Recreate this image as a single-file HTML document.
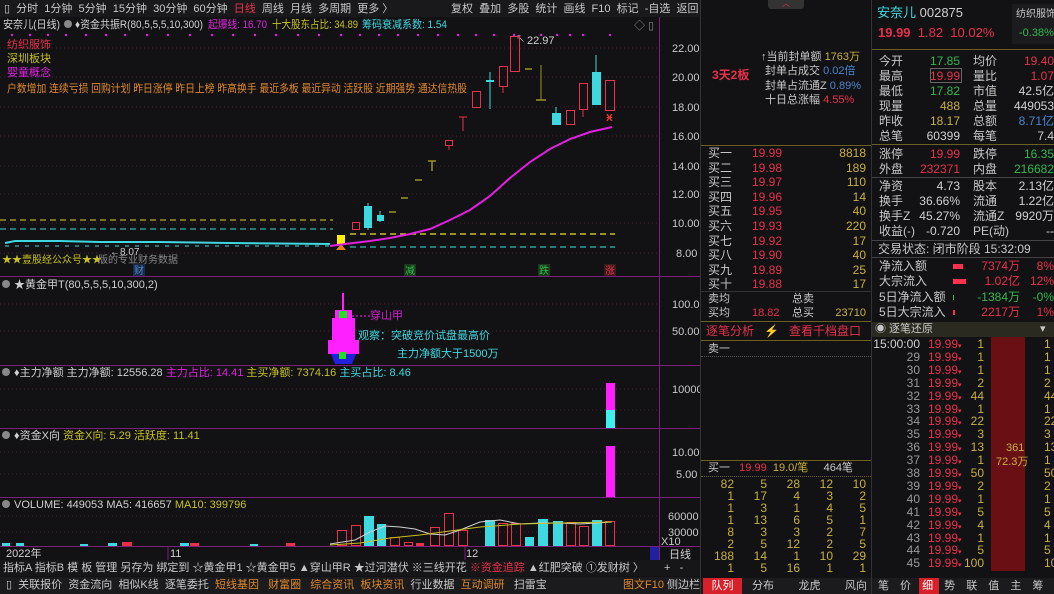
<!DOCTYPE html>
<html><head><meta charset="utf-8"><style>
*{margin:0;padding:0;box-sizing:border-box}
body{width:1054px;height:594px;background:#121214;overflow:hidden;position:relative;font-family:"Liberation Sans","Noto Sans CJK SC",sans-serif;font-size:11px;color:#c8c8c8}
.a{position:absolute;white-space:nowrap;line-height:13px}
.r{color:#e8304a}.g{color:#2fb84e}.y{color:#c8b040}.c{color:#3ed8e0}.m{color:#e020e0}.w{color:#d0d0d0}.b{color:#4a86d0}.o{color:#e0882a}
.hl{position:absolute;height:1px}
.rt{text-align:right}
</style></head><body>
<div class="a" style="left:0;top:0;width:700px;height:17px;background:#19191c"></div>
<div class="a" style="left:4px;top:3px;font-size:11px">▯&nbsp; 分时 &nbsp;1分钟 &nbsp;5分钟 &nbsp;15分钟 &nbsp;30分钟 &nbsp;60分钟 &nbsp;<span class="r">日线</span> &nbsp;周线 &nbsp;月线 &nbsp;多周期 &nbsp;更多 〉</div>
<div class="a" style="left:451px;top:3px">复权 &nbsp;叠加 &nbsp;多股 &nbsp;统计 &nbsp;画线 &nbsp;F10 &nbsp;标记 &nbsp;-自选 &nbsp;返回</div>

<svg class="a" style="left:0;top:17px" width="700" height="543" viewBox="0 17 700 543">
<line x1="659.5" y1="17" x2="659.5" y2="560" stroke="#7a1f7a"/>
<g stroke="#7a1f7a"><line x1="0" y1="276.5" x2="700" y2="276.5"/><line x1="0" y1="365.5" x2="700" y2="365.5"/><line x1="0" y1="428.5" x2="700" y2="428.5"/><line x1="0" y1="497.5" x2="700" y2="497.5"/><line x1="0" y1="546.5" x2="700" y2="546.5"/></g>
<g stroke="#4a1f3a" stroke-dasharray="1 3"><line x1="0" y1="48" x2="659" y2="48"/><line x1="0" y1="77" x2="659" y2="77"/><line x1="0" y1="107" x2="659" y2="107"/><line x1="0" y1="136" x2="659" y2="136"/><line x1="0" y1="166" x2="659" y2="166"/><line x1="0" y1="194" x2="659" y2="194"/><line x1="0" y1="223" x2="659" y2="223"/><line x1="0" y1="253" x2="659" y2="253"/>
<line x1="0" y1="304" x2="659" y2="304"/><line x1="0" y1="331" x2="659" y2="331"/><line x1="0" y1="389" x2="659" y2="389"/><line x1="0" y1="410" x2="659" y2="410"/><line x1="0" y1="452" x2="659" y2="452"/><line x1="0" y1="474" x2="659" y2="474"/><line x1="0" y1="516" x2="659" y2="516"/><line x1="0" y1="532" x2="659" y2="532"/></g>
<g font-size="11" fill="#c8c8c8"><text x="672" y="52">22.00</text><text x="672" y="81">20.00</text><text x="672" y="111">18.00</text><text x="672" y="140">16.00</text><text x="672" y="170">14.00</text><text x="672" y="198">12.00</text><text x="672" y="227">10.00</text><text x="676" y="257">8.00</text>
<text x="672" y="308">100.0</text><text x="672" y="335">50.00</text><text x="672" y="393">10000</text><text x="672" y="456">10.00</text><text x="676" y="478">5.00</text><text x="668" y="520">60000</text><text x="668" y="536">30000</text><text x="661" y="545">X10</text></g>
<g font-size="11"><text x="3" y="28" fill="#d0d0d0" textLength="57" lengthAdjust="spacingAndGlyphs">安奈儿(日线)</text><circle cx="68" cy="24" r="4" fill="#888"/><text x="75" y="28" fill="#d0d0d0" textLength="128" lengthAdjust="spacingAndGlyphs">♦资金共振R(80,5,5,5,10,300)</text><text x="208" y="28" fill="#e020e0" textLength="59" lengthAdjust="spacingAndGlyphs">起爆线: 16.70</text><text x="272" y="28" fill="#c8c020" textLength="86" lengthAdjust="spacingAndGlyphs">十大股东占比: 34.89</text><text x="362" y="28" fill="#3ed8e0" textLength="85" lengthAdjust="spacingAndGlyphs">筹码衰减系数: 1.54</text>
<text x="7" y="48" fill="#e8304a">纺织服饰</text><text x="7" y="62" fill="#c8c020">深圳板块</text><text x="7" y="76" fill="#e020e0">婴童概念</text>
<text x="7" y="92" fill="#e0882a" textLength="460" lengthAdjust="spacingAndGlyphs">户数增加 连续亏损 回购计划 昨日涨停 昨日上榜 昨高换手 最近多板 最近异动 活跃股 近期强势 通达信热股</text></g>
<text x="634" y="29" fill="#888" font-size="11">◇ ▯</text>
<g fill="#e020e0"><circle cx="12" cy="35" r="1.2"/><circle cx="30" cy="35" r="1.2"/><circle cx="48" cy="35" r="1.2"/><circle cx="66" cy="35" r="1.2"/><circle cx="86" cy="35" r="1.2"/><circle cx="106" cy="35" r="1.2"/><circle cx="125" cy="35" r="1.2"/><circle cx="147" cy="35" r="1.2"/><circle cx="168" cy="35" r="1.2"/><circle cx="190" cy="35" r="1.2"/><circle cx="212" cy="35" r="1.2"/><circle cx="233" cy="35" r="1.2"/><circle cx="255" cy="35" r="1.2"/><circle cx="276" cy="35" r="1.2"/><circle cx="298" cy="35" r="1.2"/><circle cx="319" cy="35" r="1.2"/><circle cx="341" cy="35" r="1.2"/><circle cx="360" cy="35" r="1.2"/><circle cx="379" cy="35" r="1.2"/><circle cx="398" cy="35" r="1.2"/><circle cx="418" cy="35" r="1.2"/><circle cx="438" cy="35" r="1.2"/><circle cx="458" cy="35" r="1.2"/><circle cx="476" cy="35" r="1.2"/><circle cx="494" cy="35" r="1.2"/><circle cx="514" cy="35" r="1.2"/><circle cx="541" cy="35" r="1.2"/><circle cx="557" cy="35" r="1.2"/><circle cx="570" cy="35" r="1.2"/><circle cx="583" cy="35" r="1.2"/><circle cx="610" cy="35" r="1.2"/></g>
<text x="527" y="44" font-size="11" fill="#d0d0d0">22.97</text><text x="516" y="42" font-size="9" fill="#d0d0d0">↖</text>
<g stroke-dasharray="6 4" stroke-width="1.5"><line x1="0" y1="220" x2="333" y2="220" stroke="#9a9420"/><line x1="0" y1="229" x2="333" y2="229" stroke="#2a9a9a"/><line x1="350" y1="234" x2="615" y2="234" stroke="#c8c020"/><line x1="350" y1="247" x2="615" y2="247" stroke="#2aa0a0"/></g>
<polyline points="5,243 15,241 60,241 100,242 160,242 230,243 330,244" fill="none" stroke="#3ed8e0" stroke-width="2"/>
<g stroke="#3ed8e0"><line x1="5" y1="246" x2="330" y2="246" stroke-dasharray="4 6"/></g>
<text x="110" y="255" fill="#d0d0d0" font-size="10">←8.07</text>
<text x="2" y="263" font-size="10" fill="#c8c020">★★壹股经公众号★★</text><text x="98" y="263" font-size="10" fill="#888">版的专业财务数据</text>
<g stroke-width="1">
<rect x="337" y="235" width="8" height="10" fill="#ffee00"/><path d="M336 250 l5-6 l5 6z" fill="#e08020"/>
<rect x="352.5" y="222.5" width="7" height="7" fill="none" stroke="#e8304a"/>
<rect x="364" y="206" width="8" height="22" fill="#3ed8e0"/><line x1="368" y1="203" x2="368" y2="230" stroke="#3ed8e0"/>
<rect x="377" y="215" width="7" height="6" fill="#3ed8e0"/><line x1="380" y1="211" x2="380" y2="222" stroke="#3ed8e0"/>
<g stroke="#9a9420" stroke-width="1.5"><line x1="389" y1="212" x2="396" y2="212"/><line x1="401" y1="198" x2="408" y2="198"/><line x1="415" y1="180" x2="422" y2="180"/><line x1="428" y1="161" x2="436" y2="161"/><line x1="432" y1="161" x2="432" y2="171"/></g>
<rect x="445.5" y="140.5" width="7" height="5" fill="none" stroke="#e8304a"/><line x1="449" y1="146" x2="449" y2="150" stroke="#e8304a"/>
<line x1="463" y1="117" x2="463" y2="131" stroke="#e8304a"/><line x1="459" y1="117" x2="467" y2="117" stroke="#e8304a"/>
<rect x="472.5" y="91.5" width="8" height="16" fill="none" stroke="#e8304a"/>
<line x1="490" y1="72" x2="490" y2="109" stroke="#3ed8e0"/><line x1="486" y1="81" x2="494" y2="81" stroke="#3ed8e0" stroke-width="2"/>
<rect x="499.5" y="66.5" width="8" height="20" fill="none" stroke="#e8304a"/><line x1="503" y1="87" x2="503" y2="93" stroke="#e8304a"/>
<rect x="510.5" y="36.5" width="9" height="35" fill="none" stroke="#e8304a"/>
<line x1="525" y1="69" x2="532" y2="69" stroke="#9a9420" stroke-width="1.5"/>
<line x1="541" y1="65" x2="541" y2="100" stroke="#9a9420"/><line x1="536" y1="100" x2="546" y2="100" stroke="#9a9420" stroke-width="1.5"/>
<rect x="552" y="113" width="9" height="12" fill="#3ed8e0"/><line x1="556" y1="107" x2="556" y2="113" stroke="#3ed8e0"/>
<rect x="566.5" y="110.5" width="8" height="14" fill="none" stroke="#e8304a"/>
<rect x="579.5" y="83.5" width="8" height="26" fill="none" stroke="#e8304a"/><line x1="583" y1="110" x2="583" y2="117" stroke="#e8304a"/>
<rect x="592" y="72" width="9" height="33" fill="#3ed8e0"/><line x1="596" y1="55" x2="596" y2="72" stroke="#3ed8e0"/>
<rect x="605.5" y="80.5" width="9" height="30" fill="none" stroke="#e8304a"/>
<text x="606" y="121" fill="#ff3030" font-size="10" font-weight="bold">Ӿ</text>
</g>
<polyline points="330,246 345,244 370,241 390,238 410,234 430,229 450,220 470,210 490,196 510,178 530,162 550,149 570,139 590,132 612,127" fill="none" stroke="#e020e0" stroke-width="2"/>
<rect x="133" y="264" width="12" height="12" fill="#1a2a4a"/><text x="134" y="274" fill="#4a86d0" font-size="10">财</text>
<rect x="404" y="264" width="12" height="12" fill="#1a3a1a"/><text x="405" y="274" fill="#2fb84e" font-size="10">减</text>
<rect x="538" y="264" width="12" height="12" fill="#1a3a1a"/><text x="539" y="274" fill="#2fb84e" font-size="10">跌</text>
<rect x="604" y="264" width="12" height="12" fill="#3a1a1a"/><text x="605" y="274" fill="#e8304a" font-size="10">涨</text>
<circle cx="6" cy="284" r="4" fill="#888"/><text x="14" y="288" font-size="11" fill="#d0d0d0">★黄金甲T(80,5,5,5,10,300,2)</text>
<line x1="343" y1="293" x2="343" y2="310" stroke="#ff20ff" stroke-width="2"/>
<rect x="335" y="310" width="17" height="8" fill="#ff20ff"/><rect x="332" y="318" width="23" height="22" fill="#ff20ff"/><rect x="328" y="340" width="31" height="14" fill="#ff20ff"/>
<path d="M331 354 h25 l-4 10 h-17z" fill="#2020e0"/><rect x="339" y="311" width="8" height="7" fill="#20e020"/><rect x="339" y="352" width="7" height="7" fill="#20e020"/>
<line x1="348" y1="316" x2="370" y2="316" stroke="#ff20ff" stroke-dasharray="2 2"/>
<text x="370" y="319" font-size="11" fill="#d020d0">穿山甲</text>
<text x="358" y="339" font-size="11" fill="#3ed8e0">观察：突破竞价试盘最高价</text>
<text x="397" y="357" font-size="11" fill="#3ed8e0">主力净额大于1500万</text>
<circle cx="6" cy="372" r="4" fill="#888"/><text x="14" y="376" font-size="11"><tspan fill="#d0d0d0">♦主力净额 主力净额: 12556.28 </tspan><tspan fill="#e020e0">主力占比: 14.41 </tspan><tspan fill="#c8c020">主买净额: 7374.16 </tspan><tspan fill="#3ed8e0">主买占比: 8.46</tspan></text>
<rect x="606" y="383" width="9" height="27" fill="#ff20ff"/><rect x="606" y="410" width="9" height="18" fill="#3ef0f0"/>
<circle cx="6" cy="435" r="4" fill="#888"/><text x="14" y="439" font-size="11"><tspan fill="#d0d0d0">♦资金X向 </tspan><tspan fill="#c8c020">资金X向: 5.29 活跃度: 11.41</tspan></text>
<rect x="606" y="446" width="9" height="51" fill="#ff20ff"/>
<circle cx="6" cy="504" r="4" fill="#888"/><text x="14" y="508" font-size="11"><tspan fill="#d0d0d0">VOLUME: 449053 MA5: 416657 </tspan><tspan fill="#c8c020">MA10: 399796</tspan></text>
<g fill="#3ed8e0"><rect x="364" y="516" width="10" height="30"/><rect x="377" y="524" width="9" height="22"/><rect x="485" y="520" width="10" height="26"/><rect x="525" y="537" width="9" height="9"/><rect x="538" y="519" width="10" height="27"/><rect x="553" y="521" width="10" height="25"/><rect x="592" y="520" width="10" height="26"/>
<rect x="2" y="543" width="8" height="3"/><rect x="16" y="543" width="8" height="3"/><rect x="80" y="544" width="8" height="2"/><rect x="108" y="543" width="9" height="3"/><rect x="180" y="543" width="9" height="3"/><rect x="250" y="544" width="8" height="2"/></g>
<g fill="none" stroke="#e8304a"><rect x="337.5" y="530.5" width="9" height="15"/><rect x="351.5" y="525.5" width="9" height="20"/><rect x="390.5" y="537.5" width="9" height="8"/><rect x="404.5" y="542.5" width="8" height="3"/><rect x="430.5" y="527.5" width="9" height="18"/><rect x="444.5" y="513.5" width="9" height="32"/><rect x="458.5" y="530.5" width="9" height="15"/><rect x="498.5" y="523.5" width="9" height="22"/><rect x="511.5" y="523.5" width="9" height="22"/><rect x="566.5" y="522.5" width="9" height="23"/><rect x="579.5" y="526.5" width="9" height="19"/><rect x="605.5" y="521.5" width="9" height="24"/></g>
<g fill="#e8304a"><rect x="122" y="542" width="10" height="4"/><rect x="190" y="543" width="9" height="3"/><rect x="286" y="543" width="9" height="3"/><rect x="416" y="543" width="8" height="3"/></g>
<polyline points="330,544 355,540 370,532 385,526 400,527 415,529 430,534 445,535 460,530 480,522 500,520 520,524 540,523 560,523 580,524 612,522" fill="none" stroke="#d0d0d0" stroke-width="1"/>
<polyline points="330,545 360,543 390,538 420,535 450,531 480,527 520,524 560,523 612,522" fill="none" stroke="#c8c020" stroke-width="1"/>
<text x="6" y="557" font-size="11" fill="#d0d0d0">2022年</text><line x1="168" y1="547" x2="168" y2="560" stroke="#7a1f7a"/><text x="170" y="557" font-size="11" fill="#d0d0d0">11</text>
<line x1="465" y1="547" x2="465" y2="560" stroke="#7a1f7a"/><text x="466" y="557" font-size="11" fill="#d0d0d0">12</text>
<rect x="650" y="547" width="9" height="13" fill="#2020a0"/><text x="669" y="558" font-size="11" fill="#d0d0d0">日线</text>
</svg>
<div class="a" style="left:0;top:560px;width:700px;height:16px;background:#161618"></div>
<div class="a" style="left:3px;top:562px">指标A 指标B 模 板 管理 另存为 绑定到 ☆黄金甲1 ☆黄金甲5 ▲穿山甲R ★过河潜伏 ※三线开花 <span class="r">※资金追踪</span> ▲红肥突破 ①发财树 〉</div>
<div class="a" style="left:664px;top:562px">+ &nbsp; -</div>
<div class="a" style="left:0;top:577px;width:700px;height:17px;background:#1b1b1e"></div>
<div class="a" style="left:6px;top:579px">▯ &nbsp;关联报价 &nbsp;资金流向 &nbsp;相似K线 &nbsp;逐笔委托 &nbsp;<span class="o">短线基因 &nbsp;&nbsp;财富圈 &nbsp;&nbsp;综合资讯 &nbsp;板块资讯</span> &nbsp;行业数据 &nbsp;<span class="o">互动调研</span> &nbsp;&nbsp;扫雷宝</div>
<div class="a" style="left:623px;top:579px"><span class="o">图文F10</span> 侧边栏</div>

<div class="a" style="left:700px;top:0;width:1px;height:594px;background:#333"></div>
<div class="a" style="left:871px;top:0;width:1px;height:594px;background:#333"></div>
<div class="a" style="left:768px;top:0;width:36px;height:9px;background:#333;border-radius:0 0 3px 3px;color:#e8304a;font-size:8px;line-height:8px;text-align:center">︿</div>
<div class="a r" style="left:712px;top:69px;font-size:12px;font-weight:bold">3天2板</div>
<div class="a" style="left:761px;top:51px">↑当前封单额 <span class="y">1763万</span></div>
<div class="a" style="left:765px;top:65px">封单占成交 <span class="b">0.02倍</span></div>
<div class="a" style="left:765px;top:80px">封单占流通Z <span class="b">0.89%</span></div>
<div class="a" style="left:765px;top:94px">十日总涨幅 <span class="r">4.55%</span></div>
<div class="hl" style="left:701px;top:145px;width:170px;background:#6a6020"></div>
<div class="hl" style="left:701px;top:291px;width:170px;background:#333"></div>
<div class="a" style="left:708px;top:293px">卖均</div><div class="a" style="left:792px;top:293px">总卖</div>
<div class="a" style="left:708px;top:307px">买均</div><div class="a r" style="left:752px;top:307px">18.82</div><div class="a" style="left:792px;top:307px">总买</div><div class="a y rt" style="left:820px;top:307px;width:46px">23710</div>
<div class="hl" style="left:701px;top:321px;width:170px;background:#6a6020"></div>
<div class="a r" style="left:706px;top:325px;font-size:12px">逐笔分析 &nbsp;&nbsp;<span class="y">⚡</span>&nbsp;&nbsp; 查看千档盘口</div>
<div class="hl" style="left:701px;top:340px;width:170px;background:#6a6020"></div>
<div class="a" style="left:708px;top:343px">卖一</div>
<div class="hl" style="left:701px;top:356px;width:170px;border-top:1px dotted #555"></div>
<div class="hl" style="left:701px;top:460px;width:170px;background:#6a6020"></div>
<div class="a" style="left:708px;top:462px">买一 &nbsp;&nbsp;<span class="r">19.99</span> &nbsp;<span class="y">19.0/笔</span> &nbsp;&nbsp;&nbsp;&nbsp;464笔</div>
<div class="hl" style="left:701px;top:476px;width:170px;border-top:1px dotted #6a6020"></div>
<div class="a" style="left:701px;top:578px;width:170px;height:16px;background:#1b1b1e"></div>
<div class="a" style="left:703px;top:578px;width:39px;height:16px;background:#d8202a;color:#fff;text-align:center;line-height:16px">队列</div>
<div class="a" style="left:752px;top:580px">分布 &nbsp;&nbsp;&nbsp;&nbsp;&nbsp;&nbsp;&nbsp;龙虎 &nbsp;&nbsp;&nbsp;&nbsp;&nbsp;&nbsp;&nbsp;风向</div>

<div class="a c" style="left:877px;top:5px;font-size:13px;line-height:15px">安奈儿 <span class="w">002875</span></div>
<div class="a r" style="left:878px;top:25px;font-size:13px;line-height:15px"><b>19.99</b> &nbsp;1.82 &nbsp;10.02%</div>
<div class="a" style="left:1012px;top:4px;width:42px;height:40px;background:#1c1c1e"></div>
<div class="a" style="left:1016px;top:8px;font-size:10px">纺织服饰</div><div class="a g" style="left:1019px;top:27px">-0.38%</div>
<div class="hl" style="left:872px;top:49px;width:182px;background:#6a6020"></div>
<div class="a" style="left:930px;top:68px;width:32px;height:15px;border:1px solid #666"></div>
<div class="a" style="left:872px;top:240px;width:182px;height:1px;background:#444"></div>
<div class="a" style="left:878px;top:243px;font-size:12px">交易状态: 闭市阶段 15:32:09</div>
<div class="a" style="left:872px;top:257px;width:182px;height:1px;background:#444"></div>
<div class="a" style="left:872px;top:322px;width:182px;height:15px;background:#2a2a20"></div>
<div class="a" style="left:875px;top:323px">◉ 逐笔还原</div><div class="a" style="left:1040px;top:323px">▾ </div>
<div class="a" style="left:991px;top:337px;width:34px;height:234px;background:#6a1015"></div>
<div class="a y" style="left:1006px;top:442px">361</div><div class="a y" style="left:996px;top:456px">72.3万</div>
<div class="a" style="left:872px;top:578px;width:182px;height:16px;background:#1b1b1e"></div>
<div class="a" style="left:919px;top:578px;width:20px;height:16px;background:#d8202a"></div>
<div class="a" style="left:878px;top:580px;word-spacing:8px">笔 价 <span style="color:#fff">细</span> 势 联 值 主 筹</div>
<script>
function add(h){document.body.insertAdjacentHTML('beforeend',h)}
var bn=['买一','买二','买三','买四','买五','买六','买七','买八','买九','买十'],bp=['19.99','19.98','19.97','19.96','19.95','19.93','19.92','19.90','19.89','19.88'],bv=[8818,189,110,14,40,220,17,40,25,17];
for(var i=0;i<10;i++){var y=147+i*14.6;add('<div class="a" style="left:708px;top:'+y+'px;font-size:12px">'+bn[i]+'</div><div class="a r" style="left:752px;top:'+y+'px;font-size:12px">'+bp[i]+'</div><div class="a y rt" style="left:820px;top:'+y+'px;width:46px;font-size:12px">'+bv[i]+'</div>')}
var gr=[[82,5,28,12,10],[1,17,4,3,2],[1,3,1,4,5],[1,13,6,5,1],[8,3,3,2,7],[2,5,12,2,5],[188,14,1,10,29],[1,5,16,1,1]];
for(var r=0;r<8;r++)for(var c=0;c<5;c++)add('<div class="a y rt" style="left:'+(706+c*33)+'px;top:'+(478+r*12)+'px;width:28px;font-size:12px;line-height:12px">'+gr[r][c]+'</div>');
var q=[['今开','17.85','g','均价','19.40','r'],['最高','19.99','r','量比','1.07','r'],['最低','17.82','g','市值','42.5亿','w'],['现量','488','y','总量','449053','w'],['昨收','18.17','y','总额','8.71亿','b'],['总笔','60399','w','每笔','7.4','w'],null,['涨停','19.99','r','跌停','16.35','g'],['外盘','232371','r','内盘','216682','g'],null,['净资','4.73','w','股本','2.13亿','w'],['换手','36.66%','w','流通','1.22亿','w'],['换手Z','45.27%','w','流通Z','9920万','w'],['收益(-)','-0.720','w','PE(动)','--','w']];
var ys=[55,70,85,100,115,130,0,148,163,0,180,195,210,225];
for(var i=0;i<q.length;i++){if(!q[i])continue;var y=ys[i],e=q[i];add('<div class="a" style="left:879px;top:'+y+'px;font-size:12px">'+e[0]+'</div><div class="a rt '+e[2]+'" style="left:900px;top:'+y+'px;width:60px;font-size:12px">'+e[1]+'</div><div class="a" style="left:973px;top:'+y+'px;font-size:12px">'+e[3]+'</div><div class="a rt '+e[5]+'" style="left:990px;top:'+y+'px;width:64px;font-size:12px">'+e[4]+'</div>')}
add('<div class="hl" style="left:872px;top:144px;width:182px;background:#6a6020"></div><div class="hl" style="left:872px;top:177px;width:182px;background:#444"></div>');
var f=[['净流入额',20,'7374万','8%','r'],['大宗流入',26,'1.02亿','12%','r'],['5日净流入额',2,'-1384万','-0%','g'],['5日大宗流入',3,'2217万','1%','r']];
for(var i=0;i<4;i++){var y=260+i*15.3,e=f[i];add('<div class="a" style="left:879px;top:'+y+'px;font-size:12px">'+e[0]+'</div><div class="a" style="left:953px;top:'+(y+4)+'px;width:'+(e[1]/2)+'px;height:5px;background:'+(e[4]=='g'?'#2fb84e':'#ff3050')+'"></div><div class="a rt '+e[4]+'" style="left:960px;top:'+y+'px;width:60px;font-size:12px">'+e[2]+'</div><div class="a rt '+e[4]+'" style="left:1020px;top:'+y+'px;width:34px;font-size:12px">'+e[3]+'</div>')}
var tv=[1,1,1,2,44,1,22,3,13,1,50,2,1,5,4,1,5,100],tl=['15:00:00',29,30,31,32,33,34,35,36,37,38,39,40,41,42,43,44,45];
for(var i=0;i<18;i++){var y=338+i*12.9;add('<div class="a rt" style="left:872px;top:'+y+'px;width:48px;font-size:12px;color:'+(i?'#999':'#d0d0d0')+'">'+tl[i]+'</div><div class="a r" style="left:928px;top:'+y+'px;font-size:12px">19.99<span style="font-size:7px">▾</span></div><div class="a y rt" style="left:958px;top:'+y+'px;width:26px;font-size:12px">'+tv[i]+'</div><div class="a y" style="left:1044px;top:'+y+'px;font-size:12px">'+tv[i]+'</div>')}
</script>
</body></html>
